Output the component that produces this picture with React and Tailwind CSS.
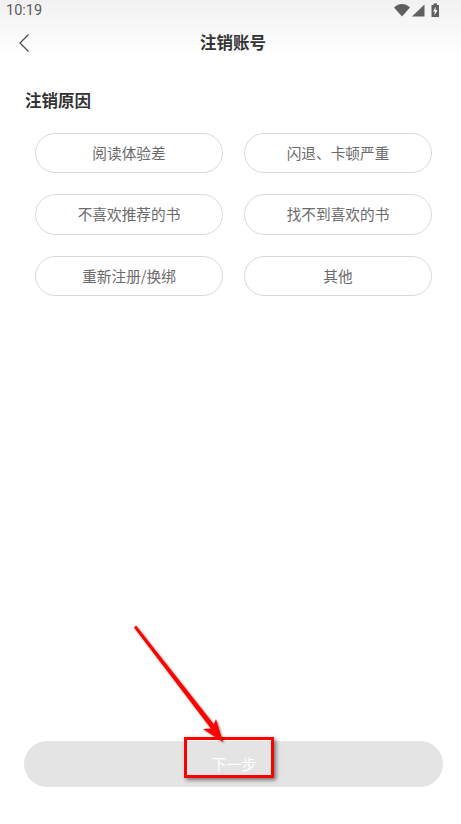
const font = { fontFamily: '"Noto Sans CJK SC", "Roboto", sans-serif' };

const reasons = ["阅读体验差", "闪退、卡顿严重", "不喜欢推荐的书", "找不到喜欢的书", "重新注册/换绑", "其他"];

function StatusIcons() {
  return (
    <svg width="52" height="18" viewBox="0 0 52 18" className="block">
      <path d="M1 6.500C3.500 4 6.500 3 9 3S14.500 4 17 6.500L9 15.500Z" fill="#5f5f5f" />
      <path d="M31.500 3.500V15.500H19Z" fill="#5f5f5f" />
      <path d="M38.500 4H40.500V2.500H44V4H46V16H38.500Z" fill="#5f5f5f" />
      <path d="M42.800 5.500L40 10.500H41.800L41.300 14.500L44.500 9H42.500Z" fill="#ffffff" />
    </svg>
  );
}

export default function App() {
  return (
    <div className="relative w-[461px] h-[824px] overflow-hidden bg-white" style={font}>
      <div className="h-[56px] bg-gradient-to-b from-[#f1f1f1] to-white">
        <div className="h-[20px] flex items-center justify-between pl-[6px] pr-[16px]">
          <span className="text-[14.500px] leading-[20px] text-[#5a5a5a] mt-[1px]" style={{ fontFamily: "Roboto, sans-serif" }}>10:19</span>
          <StatusIcons />
        </div>
        <div className="relative h-[36px] flex items-center justify-center">
          <svg width="12" height="20" viewBox="0 0 12 20" className="absolute left-[18px] top-[13px]" fill="none" stroke="#4a4a4a" strokeWidth="1.200">
            <path d="M10.500 1.500L2 10l8.500 8.500" />
          </svg>
          <span className="text-[16.500px] leading-[24px] font-bold text-[#333333] mt-[8px] ml-[5px]">注销账号</span>
        </div>
      </div>

      <div className="pl-[25px] pt-[32px] text-[16.500px] leading-[24px] font-bold text-[#333333]">注销原因</div>

      <div className="grid grid-cols-[188px_188px] gap-x-[21px] gap-y-[21px] pl-[35px] pt-[20.800px]">
        {reasons.map((r) => (
          <div key={r} className="h-[40.500px] rounded-full border border-[#d9d9d9] flex items-center justify-center text-[14.670px] leading-[20px] text-[#6b6b6b]">
            <span className="mt-[-1px]">{r}</span>
          </div>
        ))}
      </div>

      <div className="absolute left-[24px] right-[18px] top-[741px] h-[46px] rounded-[23px] bg-[#e4e4e4] flex items-center justify-center text-[15px] text-white pl-[1px]">
        下一步
      </div>

      <div className="absolute left-[184px] top-[737px] w-[90px] h-[41px] border-[3px] border-[#fe0000] shadow-[2px_2px_4px_rgba(0,0,0,0.5)]" />

      <svg className="absolute left-[125px] top-[616px]" width="110" height="135" viewBox="125 616 110 135">
        <defs>
          <filter id="s" x="-20%" y="-20%" width="140%" height="140%">
            <feDropShadow dx="1" dy="1" stdDeviation="1.200" floodColor="#000" floodOpacity="0.55" />
          </filter>
        </defs>
        <g filter="url(#s)" fill="#fe0000">
          <path d="M134 627.500L136 625.500L216 727L212 730Z" />
          <path d="M223 742L203 729L212 728.500L216 719Z" />
        </g>
      </svg>
    </div>
  );
}
